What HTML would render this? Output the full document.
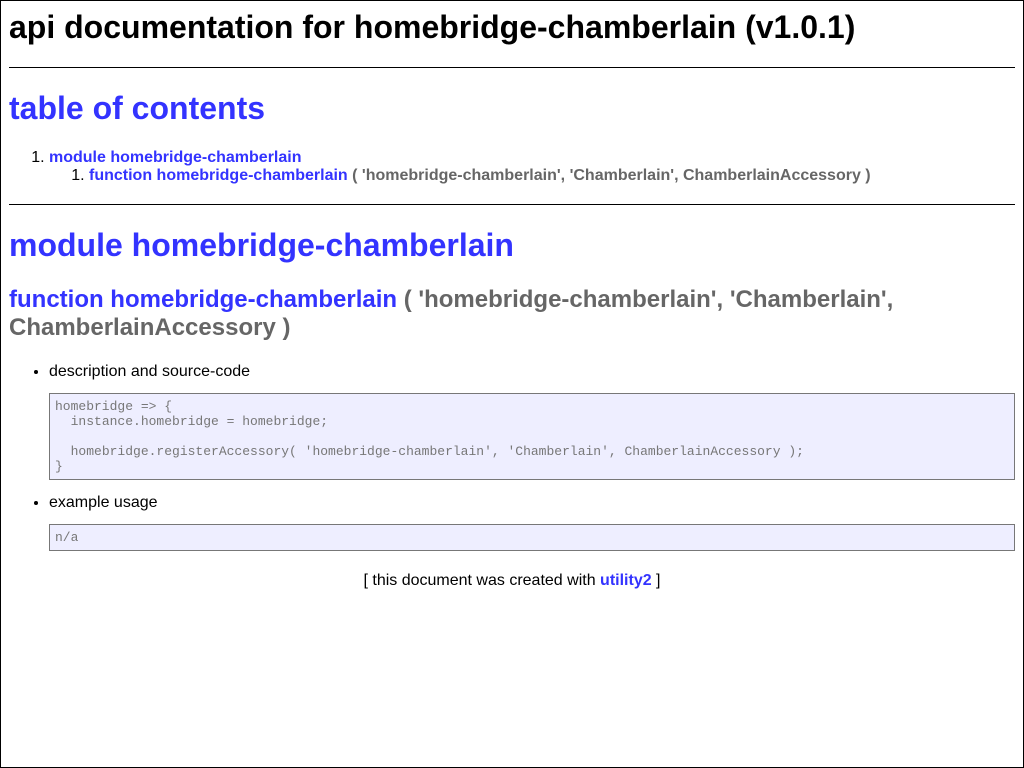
<!DOCTYPE html>
<html><head><meta charset="utf-8"><style>
html,body{margin:0;padding:0;background:#fff;}
.w{box-sizing:border-box;width:1024px;height:768px;border:1px solid #000;padding:8px;font-family:"Liberation Sans",Arial,sans-serif;font-size:16px;color:#000;overflow:hidden;}
h1{font-size:32px;margin:21px 0;line-height:37px;}
.w>h1:first-child{margin-top:0;}
h1.t{margin-top:22px;}
h1.m{margin-top:22px;margin-bottom:22px;}
h2{font-size:24px;margin:20px 0 21px;line-height:28px;}
a{color:#33f;font-weight:bold;text-decoration:none;}
.sig{color:#666;font-weight:bold;}
hr{border:0;border-top:1px solid #000;margin:0;}
.sec{border-top:1px solid #000;margin-top:19px;}
ol,ul{margin:16px 0;padding-left:40px;line-height:18px;}
ol.top{margin-top:22px;margin-bottom:0;}
ol ol{margin:0;}
pre{background:#eef;border:1px solid #777;color:#777;padding:5px;margin:12px 0 14px;font-family:"Liberation Mono",monospace;font-size:13px;line-height:15px;white-space:pre-wrap;}
.foot{margin-top:21px;text-align:center;line-height:18px;}
</style></head><body><div class="w">
<h1>api documentation for homebridge-chamberlain (v1.0.1)</h1>
<hr>
<h1 class="t"><a>table of contents</a></h1>
<ol class="top"><li><a>module homebridge-chamberlain</a>
<ol><li><a>function homebridge-chamberlain</a> <span class="sig">( 'homebridge-chamberlain', 'Chamberlain', ChamberlainAccessory )</span></li></ol></li></ol>
<div class="sec">
<h1 class="m"><a>module homebridge-chamberlain</a></h1>
<h2><a>function homebridge-chamberlain</a> <span class="sig">( 'homebridge-chamberlain', 'Chamberlain', ChamberlainAccessory )</span></h2>
<ul>
<li>description and source-code<pre>homebridge =&gt; {
  instance.homebridge = homebridge;

  homebridge.registerAccessory( 'homebridge-chamberlain', 'Chamberlain', ChamberlainAccessory );
}</pre></li>
<li>example usage<pre>n/a</pre></li>
</ul>
</div>
<div class="foot">[ this document was created with <a>utility2</a> ]</div>
</div></body></html>
